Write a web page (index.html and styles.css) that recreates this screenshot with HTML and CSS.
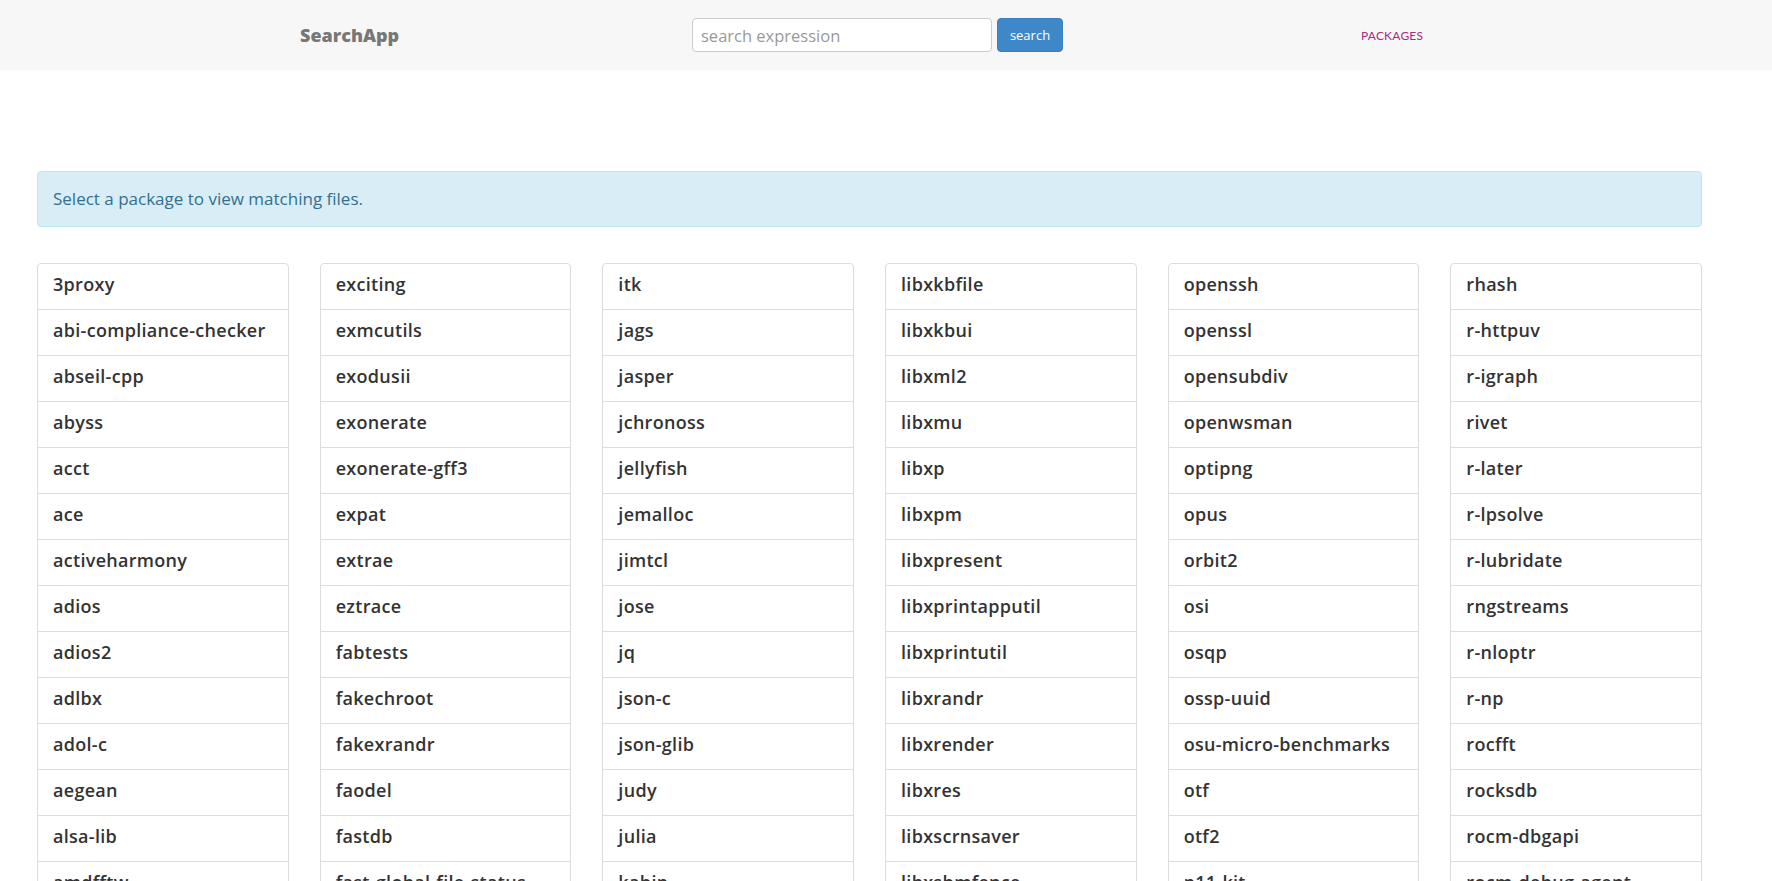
FILE: index.html
```html
<!DOCTYPE html>
<html lang="en">
<head>
<meta charset="utf-8">
<title>SearchApp</title>
<link rel="stylesheet" href="styles.css">
</head>
<body>
<header class="navbar">
  <div class="brand">SearchApp</div>
  <form class="search-form">
    <input class="search-input" type="text" placeholder="search expression">
    <button class="search-btn" type="button">search</button>
  </form>
  <a class="nav-link" href="#">PACKAGES</a>
</header>
<main class="content">
  <div class="alert-info">Select a package to view matching files.</div>
  <div class="pkg-grid">
    <ul class="list-group">
      <li class="list-item">3proxy</li>
      <li class="list-item">abi-compliance-checker</li>
      <li class="list-item">abseil-cpp</li>
      <li class="list-item">abyss</li>
      <li class="list-item">acct</li>
      <li class="list-item">ace</li>
      <li class="list-item">activeharmony</li>
      <li class="list-item">adios</li>
      <li class="list-item">adios2</li>
      <li class="list-item">adlbx</li>
      <li class="list-item">adol-c</li>
      <li class="list-item">aegean</li>
      <li class="list-item">alsa-lib</li>
      <li class="list-item">amdfftw</li>
      <li class="list-item">amg</li>
    </ul>
    <ul class="list-group">
      <li class="list-item">exciting</li>
      <li class="list-item">exmcutils</li>
      <li class="list-item">exodusii</li>
      <li class="list-item">exonerate</li>
      <li class="list-item">exonerate-gff3</li>
      <li class="list-item">expat</li>
      <li class="list-item">extrae</li>
      <li class="list-item">eztrace</li>
      <li class="list-item">fabtests</li>
      <li class="list-item">fakechroot</li>
      <li class="list-item">fakexrandr</li>
      <li class="list-item">faodel</li>
      <li class="list-item">fastdb</li>
      <li class="list-item">fast-global-file-status</li>
      <li class="list-item">fastjar</li>
    </ul>
    <ul class="list-group">
      <li class="list-item">itk</li>
      <li class="list-item">jags</li>
      <li class="list-item">jasper</li>
      <li class="list-item">jchronoss</li>
      <li class="list-item">jellyfish</li>
      <li class="list-item">jemalloc</li>
      <li class="list-item">jimtcl</li>
      <li class="list-item">jose</li>
      <li class="list-item">jq</li>
      <li class="list-item">json-c</li>
      <li class="list-item">json-glib</li>
      <li class="list-item">judy</li>
      <li class="list-item">julia</li>
      <li class="list-item">kahip</li>
      <li class="list-item">kakoune</li>
    </ul>
    <ul class="list-group">
      <li class="list-item">libxkbfile</li>
      <li class="list-item">libxkbui</li>
      <li class="list-item">libxml2</li>
      <li class="list-item">libxmu</li>
      <li class="list-item">libxp</li>
      <li class="list-item">libxpm</li>
      <li class="list-item">libxpresent</li>
      <li class="list-item">libxprintapputil</li>
      <li class="list-item">libxprintutil</li>
      <li class="list-item">libxrandr</li>
      <li class="list-item">libxrender</li>
      <li class="list-item">libxres</li>
      <li class="list-item">libxscrnsaver</li>
      <li class="list-item">libxshmfence</li>
      <li class="list-item">libxslt</li>
    </ul>
    <ul class="list-group">
      <li class="list-item">openssh</li>
      <li class="list-item">openssl</li>
      <li class="list-item">opensubdiv</li>
      <li class="list-item">openwsman</li>
      <li class="list-item">optipng</li>
      <li class="list-item">opus</li>
      <li class="list-item">orbit2</li>
      <li class="list-item">osi</li>
      <li class="list-item">osqp</li>
      <li class="list-item">ossp-uuid</li>
      <li class="list-item">osu-micro-benchmarks</li>
      <li class="list-item">otf</li>
      <li class="list-item">otf2</li>
      <li class="list-item">p11-kit</li>
      <li class="list-item">p4est</li>
    </ul>
    <ul class="list-group">
      <li class="list-item">rhash</li>
      <li class="list-item">r-httpuv</li>
      <li class="list-item">r-igraph</li>
      <li class="list-item">rivet</li>
      <li class="list-item">r-later</li>
      <li class="list-item">r-lpsolve</li>
      <li class="list-item">r-lubridate</li>
      <li class="list-item">rngstreams</li>
      <li class="list-item">r-nloptr</li>
      <li class="list-item">r-np</li>
      <li class="list-item">rocfft</li>
      <li class="list-item">rocksdb</li>
      <li class="list-item">rocm-dbgapi</li>
      <li class="list-item">rocm-debug-agent</li>
      <li class="list-item">rocm-smi</li>
    </ul>
  </div>
</main>
</body>
</html>
```
FILE: styles.css
```css
* { box-sizing: border-box; }

body {
  margin: 0;
  background: #ffffff;
  font-family: "Open Sans", "Noto Sans", sans-serif;
  color: #333333;
}

.navbar {
  display: flex;
  align-items: center;
  height: 70px;
  padding-left: 300px;
  background: #f7f7f7;
}

.brand {
  width: 392px;
  flex-shrink: 0;
  font-family: "Open Sans", sans-serif;
  font-weight: 800;
  font-size: 18px;
  color: #777777;
}

.search-form {
  display: flex;
  gap: 5px;
  margin: 0;
}

.search-input {
  width: 300px;
  height: 34px;
  padding: 4px 8px;
  border: 1px solid #cccccc;
  border-radius: 4px;
  background: #ffffff;
  font-family: "Open Sans", sans-serif;
  font-size: 16.5px;
  color: #555555;
}

.search-input::placeholder {
  color: #999999;
}

.search-btn {
  width: 66px;
  height: 34px;
  padding: 0;
  border: 1px solid #3a80c0;
  border-radius: 4px;
  background: #3e88ca;
  color: #ffffff;
  font-family: "Open Sans", sans-serif;
  font-size: 13px;
}

.nav-link {
  margin-left: 298px;
  font-family: "Lato", sans-serif;
  font-size: 12px;
  color: #a82d7c;
  text-decoration: none;
  letter-spacing: 0.2px;
}

.content {
  padding: 101px 70px 0 37px;
}

.alert-info {
  height: 56px;
  padding: 15px 15px;
  border: 1px solid #bce8f1;
  border-radius: 4px;
  background: #d9edf7;
  color: #31708f;
  font-size: 17px;
  line-height: 24px;
  margin-bottom: 36px;
}

.pkg-grid {
  display: grid;
  grid-template-columns: repeat(6, 1fr);
  column-gap: 31px;
}

.list-group {
  list-style: none;
  margin: 0;
  padding: 0;
}

.list-item {
  padding: 8px 15px 12px;
  border: 1px solid #dddddd;
  margin-bottom: -1px;
  font-family: "Open Sans", sans-serif;
  font-weight: 600;
  font-size: 18px;
  letter-spacing: 0.3px;
  line-height: 25px;
  color: #333333;
  background: #ffffff;
}

.list-item:first-child {
  border-top-left-radius: 4px;
  border-top-right-radius: 4px;
}

.list-item:last-child {
  border-bottom-left-radius: 4px;
  border-bottom-right-radius: 4px;
}
```
